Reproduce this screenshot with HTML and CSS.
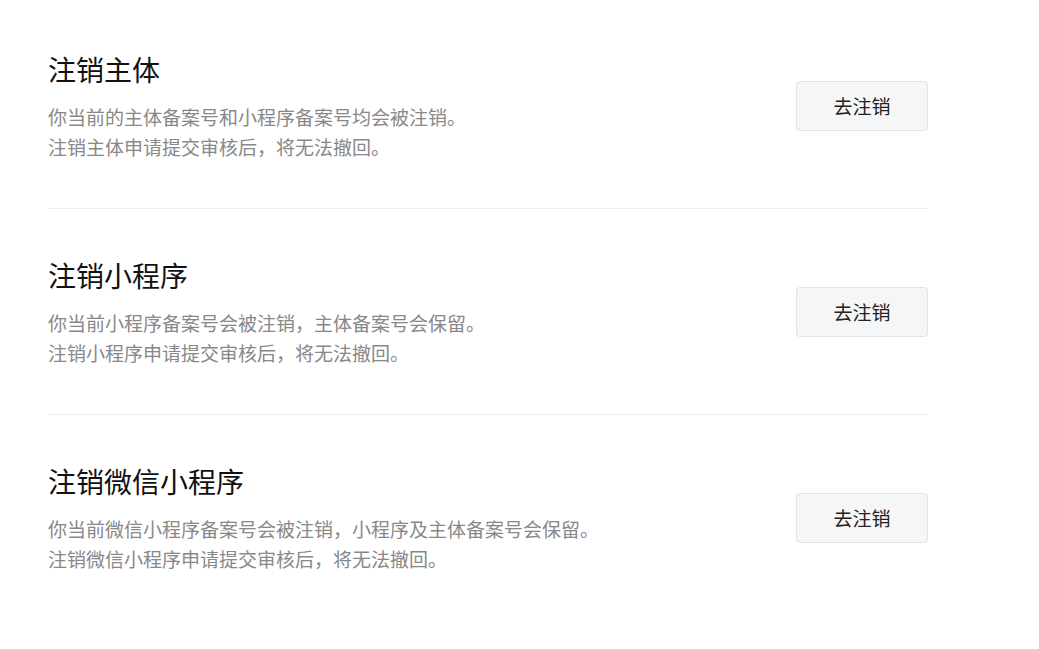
FILE: index.html
```html
<!DOCTYPE html>
<html lang="zh-CN">
<head>
<meta charset="utf-8">
<link rel="stylesheet" href="styles.css">
</head>
<body>
<div class="page">
  <div class="item">
    <div class="info">
      <div class="title">注销主体</div>
      <div class="desc">你当前的主体备案号和小程序备案号均会被注销。<br>注销主体申请提交审核后，将无法撤回。</div>
    </div>
    <button class="btn">去注销</button>
  </div>
  <div class="item">
    <div class="info">
      <div class="title">注销小程序</div>
      <div class="desc">你当前小程序备案号会被注销，主体备案号会保留。<br>注销小程序申请提交审核后，将无法撤回。</div>
    </div>
    <button class="btn">去注销</button>
  </div>
  <div class="item last">
    <div class="info">
      <div class="title">注销微信小程序</div>
      <div class="desc">你当前微信小程序备案号会被注销，小程序及主体备案号会保留。<br>注销微信小程序申请提交审核后，将无法撤回。</div>
    </div>
    <button class="btn">去注销</button>
  </div>
</div>
</body>
</html>
```
FILE: styles.css
```css
html, body {
  margin: 0;
  padding: 0;
  background: #fff;
}
body {
  font-family: "Noto Sans CJK SC", "Noto Sans", sans-serif;
}
.page {
  width: 880px;
  margin-left: 48px;
  padding-top: 3px;
}
.item {
  display: flex;
  align-items: center;
  justify-content: space-between;
  padding: 46px 0 46px;
  border-bottom: 1px solid #ededed;
}
.item.last {
  border-bottom: none;
}
.info {
  display: flex;
  flex-direction: column;
  gap: 13px;
}
.title {
  font-size: 28px;
  line-height: 40px;
  color: #111;
}
.desc {
  font-size: 19px;
  line-height: 30px;
  color: #888;
}
.btn {
  width: 132px;
  height: 50px;
  background: #f5f6f7;
  border: 1px solid #e2e3e5;
  border-radius: 4px;
  font-family: inherit;
  font-size: 19px;
  color: #222;
  padding: 0;
  cursor: pointer;
}
```
